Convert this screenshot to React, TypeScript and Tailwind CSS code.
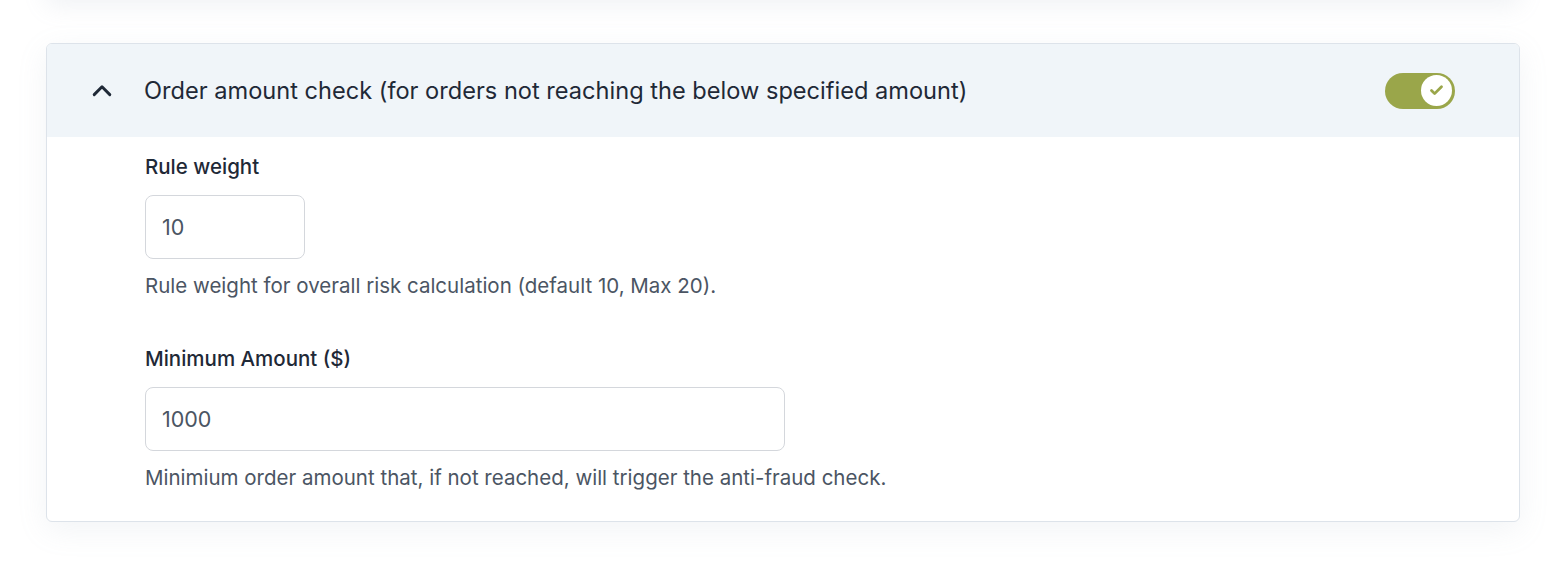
import { Check } from "lucide-react";

// ===== Field =====

interface FieldProps {
  label: string;
  value: string;
  help: string;
  width: string;
}

function Field({ label, value, help, width }: FieldProps) {
  return (
    <div className="flex flex-col">
      <label className="text-[20.5px] leading-[28px] font-medium text-[#1f2937]">{label}</label>
      <input
        readOnly
        value={value}
        className={`${width} mt-[14px] h-[64px] rounded-lg border border-[#d4d7dc] bg-white px-4 text-[21.5px] text-[#4b5563] focus:outline-none`}
      />
      <p className="mt-[15px] text-[20.5px] leading-[24px] text-[#4b5563]">{help}</p>
    </div>
  );
}

// ===== Toggle =====

function Toggle() {
  return (
    <button
      aria-label="Toggle rule"
      className="flex h-[36px] w-[70px] items-center justify-end rounded-full bg-[#9aa64a] px-[3px]"
    >
      <span className="flex h-[31px] w-[31px] items-center justify-center rounded-full bg-white">
        <Check className="h-[15px] w-[15px] text-[#9aa64a]" strokeWidth={4.5} />
      </span>
    </button>
  );
}

export default function App() {
  return (
    <div
      className="h-[564px] w-full overflow-hidden bg-white"
      style={{ fontFamily: "Inter, 'Noto Sans', sans-serif" }}
    >
      {/* tail of the card above */}
      <div className="ml-[46px] mr-[48px] -mt-[40px] h-[40px] rounded-md bg-white shadow-[0_6px_24px_rgba(148,163,184,0.14)]" />

      <div className="ml-[46px] mr-[48px] mt-[43px] overflow-hidden rounded-md border border-[#dde3ea] bg-white shadow-[0_8px_30px_rgba(148,163,184,0.12)]">
        {/* Header */}
        <div className="flex h-[93px] items-center bg-[#f0f5f9] pl-[44px] pr-[64px]">
          <svg viewBox="0 0 24 14" className="h-[13px] w-[22px] text-[#1f2937]" fill="none">
            <path d="M3.5 11.5 L12 3 L20.5 11.5" stroke="currentColor" strokeWidth="3.2" strokeLinecap="round" strokeLinejoin="round" />
          </svg>
          <h3 className="ml-[31px] flex-1 text-[23.6px] font-normal text-[#1f2937]">
            Order amount check (for orders not reaching the below specified amount)
          </h3>
          <Toggle />
        </div>

        {/* Body */}
        <div className="flex flex-col gap-[47px] pl-[98px] pt-[16px] pb-[31px]">
          <Field
            label="Rule weight"
            value="10"
            width="w-[160px]"
            help="Rule weight for overall risk calculation (default 10, Max 20)."
          />
          <Field
            label="Minimum Amount ($)"
            value="1000"
            width="w-[640px]"
            help="Minimium order amount that, if not reached, will trigger the anti-fraud check."
          />
        </div>
      </div>
    </div>
  );
}
